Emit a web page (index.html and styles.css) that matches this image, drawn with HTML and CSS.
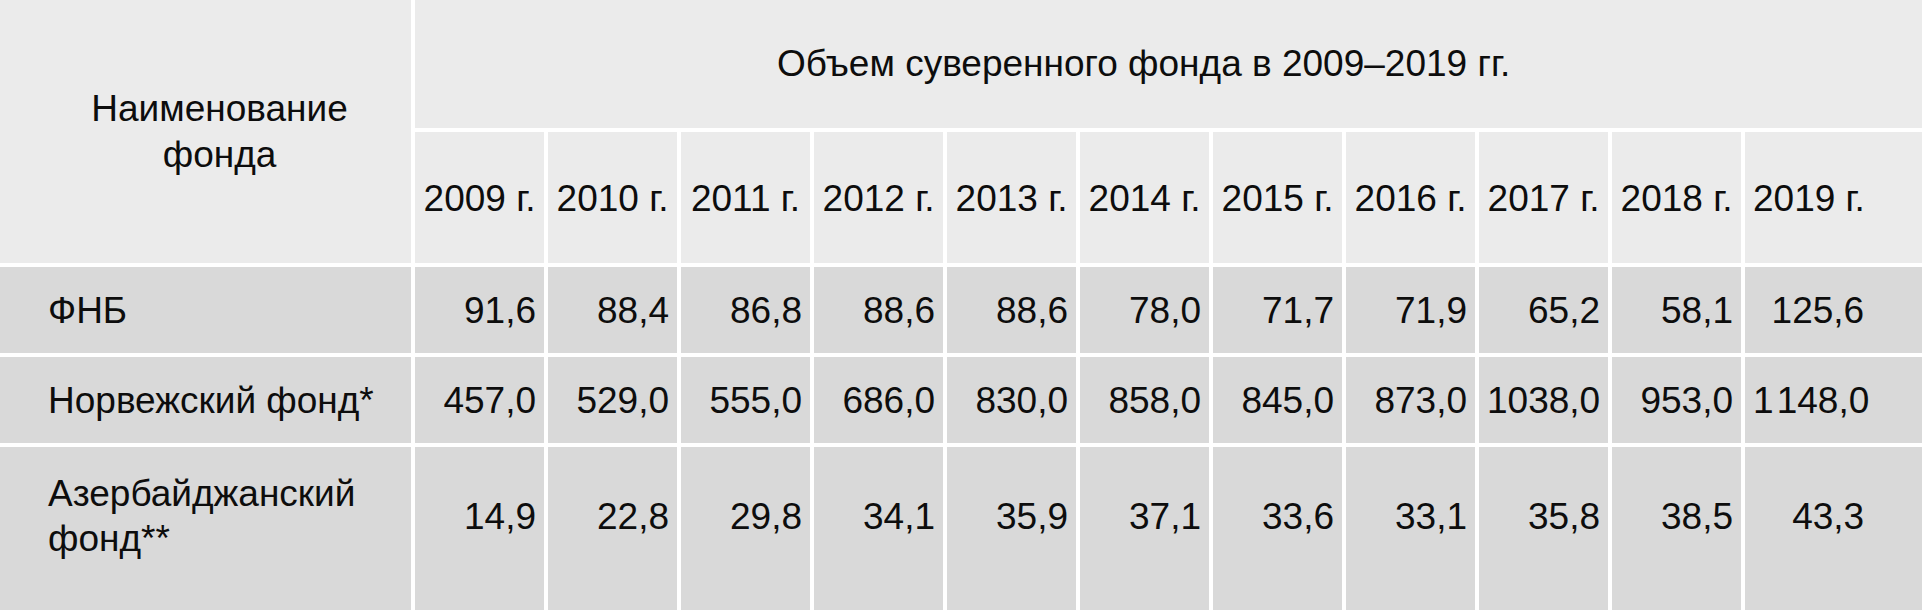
FILE: index.html
```html
<!DOCTYPE html>
<html lang="ru">
<head>
<meta charset="utf-8">
<title>Объем суверенного фонда</title>
<link rel="stylesheet" href="styles.css">
</head>
<body>
<table class="funds">
  <colgroup>
    <col class="col-name">
    <col class="col-year"><col class="col-year"><col class="col-year"><col class="col-year"><col class="col-year">
    <col class="col-year"><col class="col-year"><col class="col-year"><col class="col-year"><col class="col-year">
    <col class="col-last">
  </colgroup>
  <thead>
    <tr>
      <th class="h-name" rowspan="2">Наименование<br>фонда</th>
      <th class="h-title" colspan="11">Объем суверенного фонда в 2009–2019 гг.</th>
    </tr>
    <tr class="years">
      <th>2009 г.</th><th>2010 г.</th><th>2011 г.</th><th>2012 г.</th><th>2013 г.</th>
      <th>2014 г.</th><th>2015 г.</th><th>2016 г.</th><th>2017 г.</th><th>2018 г.</th>
      <th class="last">2019 г.</th>
    </tr>
  </thead>
  <tbody>
    <tr>
      <td class="name">ФНБ</td>
      <td>91,6</td><td>88,4</td><td>86,8</td><td>88,6</td><td>88,6</td>
      <td>78,0</td><td>71,7</td><td>71,9</td><td>65,2</td><td>58,1</td>
      <td class="last">125,6</td>
    </tr>
    <tr>
      <td class="name">Норвежский фонд*</td>
      <td>457,0</td><td>529,0</td><td>555,0</td><td>686,0</td><td>830,0</td>
      <td>858,0</td><td>845,0</td><td>873,0</td><td>1038,0</td><td>953,0</td>
      <td class="last">1&#8202;148,0</td>
    </tr>
    <tr class="final">
      <td class="name">Азербайджанский<br>фонд**</td>
      <td>14,9</td><td>22,8</td><td>29,8</td><td>34,1</td><td>35,9</td>
      <td>37,1</td><td>33,6</td><td>33,1</td><td>35,8</td><td>38,5</td>
      <td class="last">43,3</td>
    </tr>
  </tbody>
</table>
</body>
</html>
```

FILE: styles.css
```css
html, body {
  margin: 0;
  padding: 0;
  background: #d9d9d9;
  overflow: hidden;
}

.funds {
  width: 1922px;
  border-collapse: separate;
  border-spacing: 0;
  table-layout: fixed;
  font-family: "Liberation Sans", Arial, sans-serif;
  font-size: 37px;
  color: #0d0d0d;
}

.col-name { width: 415px; }
.col-year { width: 133px; }
.col-last { width: 177px; }

.funds th,
.funds td {
  box-sizing: border-box;
  border-right: 4px solid #ffffff;
  border-bottom: 4px solid #ffffff;
  font-weight: normal;
  white-space: nowrap;
  vertical-align: middle;
}

.funds th {
  background: #ebebeb;
  line-height: 46px;
  text-align: center;
}

.funds td {
  background: #d9d9d9;
  line-height: 45px;
  text-align: right;
  padding: 21px 8px 20px 8px;
}

.funds .last {
  border-right: 0;
}

.h-name {
  padding: 0 20px 0 48px;
}

.h-title {
  border-right: 0 !important;
  padding: 41px 58px 41px 8px;
}

.years th {
  padding: 44px 8px 41px 8px;
}

.years th.last {
  padding-right: 58px;
}

.funds td.last {
  padding-right: 58px;
}

.funds td.name {
  text-align: left;
  padding-left: 48px;
  padding-right: 8px;
}

.final td {
  border-bottom: 0;
  padding-top: 24px;
  padding-bottom: 60px;
}
```
